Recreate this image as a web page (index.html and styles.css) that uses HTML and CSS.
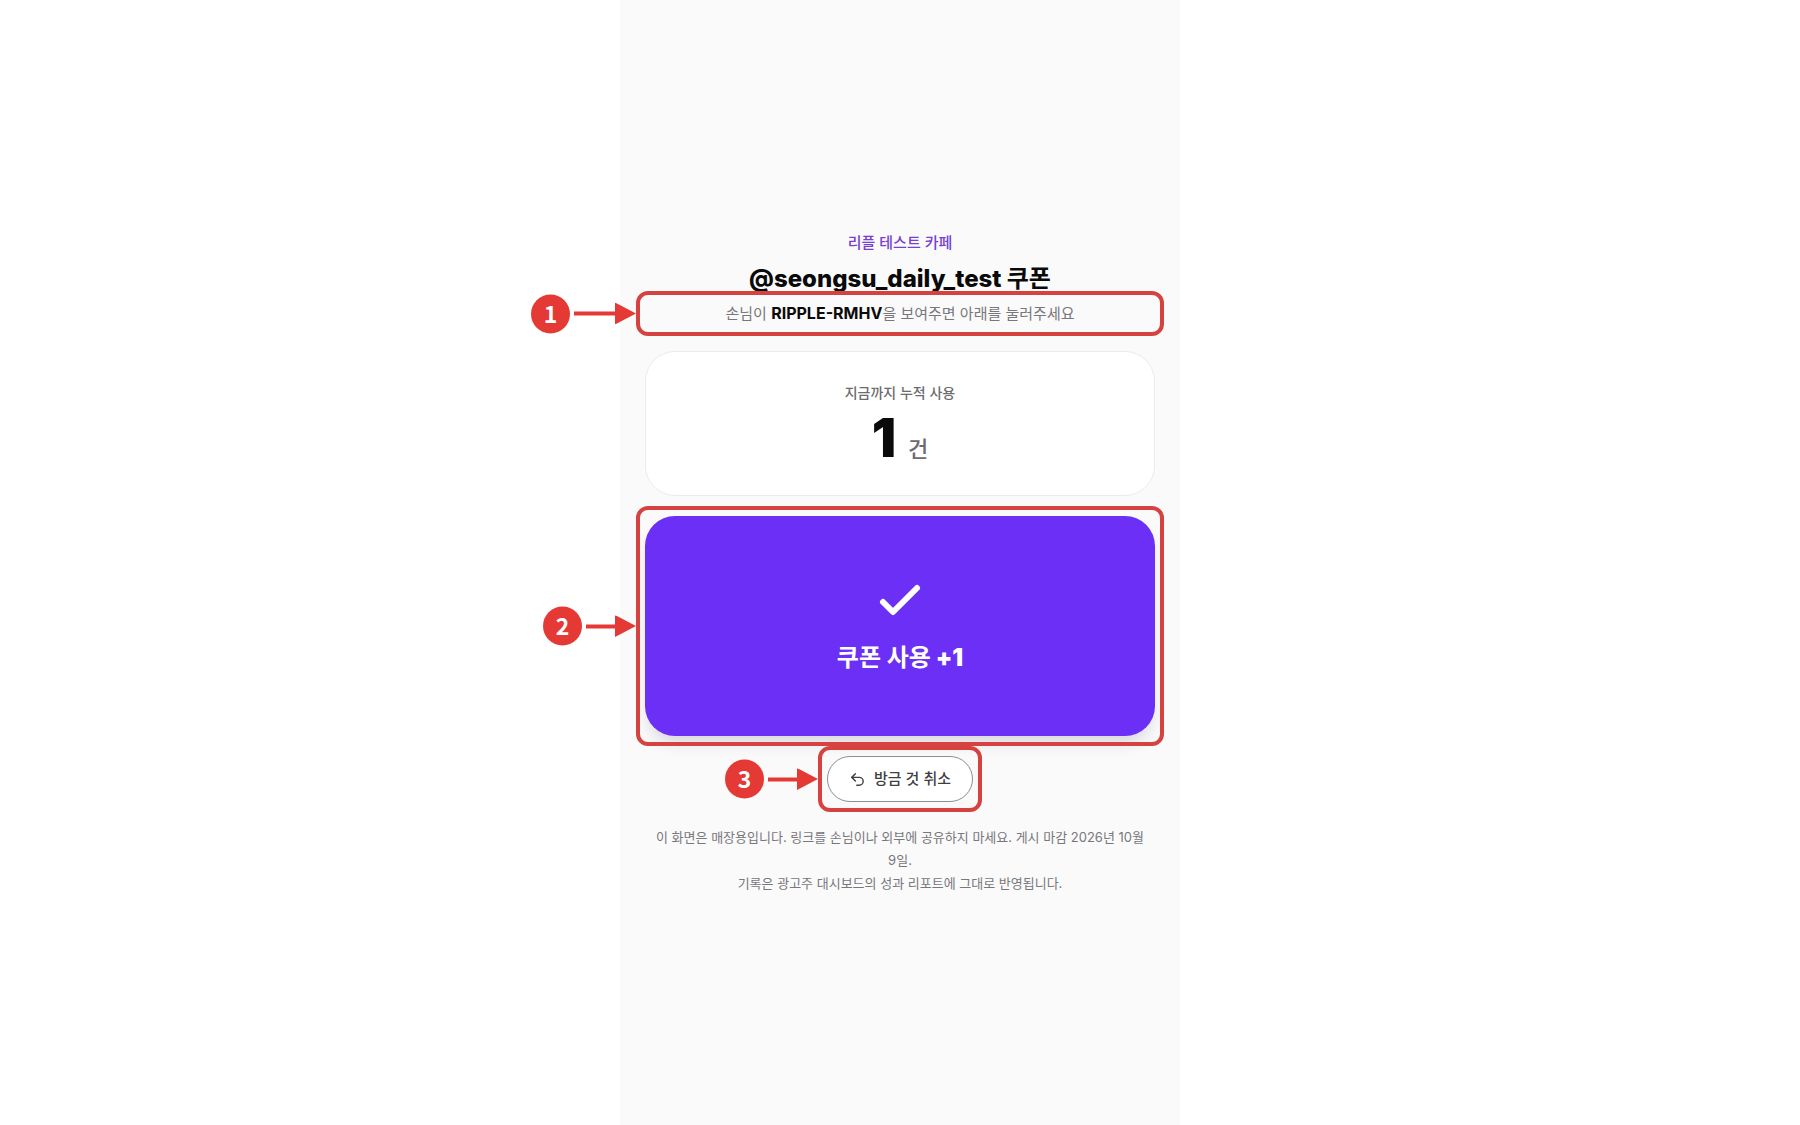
FILE: index.html
```html
<!DOCTYPE html>
<html lang="ko">
<head>
  <meta charset="utf-8">
  <meta name="viewport" content="width=device-width, initial-scale=1">
  <title>쿠폰 사용 체크</title>
  <link rel="stylesheet" href="styles.css">
</head>
<body>
  <main class="screen">
    <header class="intro">
      <p class="store">리플 테스트 카페</p>
      <h1 class="title">@seongsu_daily_test <span class="hangul">쿠폰</span></h1>
      <div class="marked marked-guide">
        <p class="guide">손님이 <strong>RIPPLE-RMHV</strong>을 보여주면 아래를 눌러주세요</p>
        <div class="frame">
          <div class="callout">
            <span class="badge">1</span>
            <span class="arrow arrow-long"></span>
          </div>
        </div>
      </div>
    </header>

    <section class="count-card">
      <h2 class="count-label">지금까지 누적 사용</h2>
      <p class="count"><span class="count-value">1</span><span class="count-unit">건</span></p>
    </section>

    <div class="marked">
      <button class="use-button" type="button">
        <svg class="check" viewBox="0 0 48 48" aria-hidden="true"><path d="M7 26 L17 36 L41 12"/></svg>
        <span><span class="hangul">쿠폰 사용</span> +1</span>
      </button>
      <div class="frame">
        <div class="callout">
          <span class="badge">2</span>
          <span class="arrow"></span>
        </div>
      </div>
    </div>

    <div class="marked marked-undo">
      <button class="undo-button" type="button">
        <svg class="undo-icon" viewBox="0 0 24 24" aria-hidden="true"><path d="M9 14 4 9l5-5"/><path d="M4 9h10.500a5.500 5.500 0 0 1 0 11H11"/></svg>
        <span>방금 것 취소</span>
      </button>
      <div class="frame">
        <div class="callout">
          <span class="badge">3</span>
          <span class="arrow"></span>
        </div>
      </div>
    </div>

    <footer class="notice">
      <p>이 화면은 매장용입니다. 링크를 손님이나 외부에 공유하지 마세요. 게시 마감 2026년 10월 9일.</p>
      <p>기록은 광고주 대시보드의 성과 리포트에 그대로 반영됩니다.</p>
    </footer>
  </main>
</body>
</html>
```

FILE: styles.css
```css
:root {
  --violet: #6c2ff5;
  --mark: #e53935;
  --frame: #d54240;
  --ink: #0a0a0b;
  --muted: #77777c;
}

* {
  box-sizing: border-box;
}

body {
  margin: 0;
  background: #fff;
  color: var(--ink);
  font-family: Inter, "Noto Sans CJK KR", sans-serif;
  word-break: keep-all;
}

h1,
h2,
p {
  margin: 0;
}

.screen {
  display: flex;
  flex-direction: column;
  justify-content: center;
  align-items: stretch;
  gap: 20px;
  max-width: 560px;
  min-height: 100vh;
  margin: 0 auto;
  padding: 24px 25px;
  background: #fafafa;
  text-align: center;
}

/* Heading */
.intro {
  display: flex;
  flex-direction: column;
  gap: 4px;
  margin-bottom: 6px;
}

.store {
  color: #7540d3;
  font-size: 15px;
  font-weight: 500;
  line-height: 26px;
}

.title {
  font-size: 24px;
  font-weight: 800;
  line-height: 38px;
}

.hangul {
  font-weight: 700;
}

.guide {
  color: var(--muted);
  font-size: 15px;
  line-height: 22px;
}

.guide strong {
  color: var(--ink);
  font-size: 16px;
  font-weight: 700;
}

/* Running total */
.count-card {
  padding: 30px 24px 16px;
  border: 1px solid #ebebee;
  border-radius: 30px;
  background: #fff;
}

.count-label {
  color: #6b6b70;
  font-size: 14px;
  font-weight: 500;
  line-height: 22px;
}

.count {
  display: flex;
  justify-content: center;
  align-items: baseline;
  gap: 12px;
  margin-top: 4px;
  line-height: 60px;
}

.count-value {
  font-size: 54px;
  font-weight: 900;
}

.count-unit {
  color: #6b6b70;
  font-size: 22px;
  font-weight: 500;
}

/* Buttons */
button {
  font-family: inherit;
  cursor: pointer;
}

.use-button {
  display: flex;
  flex-direction: column;
  justify-content: center;
  align-items: center;
  gap: 16px;
  width: 100%;
  min-height: 220px;
  border: 0;
  border-radius: 30px;
  background: var(--violet);
  box-shadow: 0 10px 16px -4px rgba(40, 20, 80, 0.16);
  color: #fff;
  font-size: 24px;
  font-weight: 900;
  line-height: 36px;
}

.check {
  width: 48px;
  height: 48px;
  fill: none;
  stroke: #fff;
  stroke-width: 6;
  stroke-linecap: round;
  stroke-linejoin: round;
}

.undo-button {
  display: flex;
  align-items: center;
  gap: 8px;
  height: 46px;
  padding: 0 21px;
  border: 1px solid #8e8e93;
  border-radius: 23px;
  background: #fff;
  color: #3f3f44;
  font-size: 15px;
  font-weight: 500;
  line-height: 22px;
}

.undo-icon {
  width: 17px;
  height: 17px;
  fill: none;
  stroke: currentColor;
  stroke-width: 2;
  stroke-linecap: round;
  stroke-linejoin: round;
}

.notice {
  margin-top: 4px;
  color: var(--muted);
  font-size: 13px;
  line-height: 23px;
}

/* Numbered guide marks laid over the screen */
.marked {
  position: relative;
}

.marked-undo {
  align-self: center;
}

.frame {
  position: absolute;
  inset: -10px -9px;
  border: 4px solid var(--frame);
  border-radius: 12px;
  pointer-events: none;
}

.marked-guide .frame {
  inset: -11px -9px;
}

.callout {
  position: absolute;
  top: 50%;
  right: 100%;
  display: flex;
  align-items: center;
  gap: 4px;
  margin-right: 4px;
  transform: translateY(-50%);
}

.badge {
  width: 39px;
  height: 39px;
  border-radius: 50%;
  background: var(--mark);
  color: #fff;
  font-family: "Noto Sans CJK KR", sans-serif;
  font-size: 23px;
  font-weight: 700;
  line-height: 36px;
}

.arrow {
  display: flex;
  align-items: center;
  width: 50px;
}

.arrow-long {
  width: 62px;
}

.arrow::before {
  flex: 1;
  height: 4px;
  background: var(--mark);
  content: "";
}

.arrow::after {
  width: 21px;
  height: 22px;
  background: var(--mark);
  clip-path: polygon(0 0, 100% 50%, 0 100%);
  content: "";
}
```
